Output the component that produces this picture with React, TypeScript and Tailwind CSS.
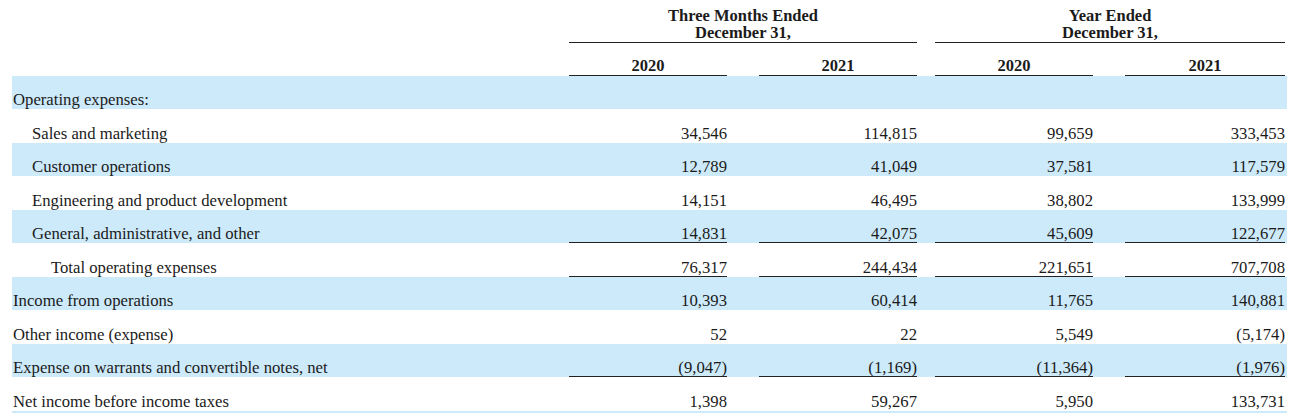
const rows: { label: string; indent: number; values: string[]; underline?: boolean }[] = [
  { label: "Operating expenses:", indent: 0, values: ["", "", "", ""] },
  { label: "Sales and marketing", indent: 1, values: ["34,546", "114,815", "99,659", "333,453"] },
  { label: "Customer operations", indent: 1, values: ["12,789", "41,049", "37,581", "117,579"] },
  { label: "Engineering and product development", indent: 1, values: ["14,151", "46,495", "38,802", "133,999"] },
  { label: "General, administrative, and other", indent: 1, values: ["14,831", "42,075", "45,609", "122,677"], underline: true },
  { label: "Total operating expenses", indent: 2, values: ["76,317", "244,434", "221,651", "707,708"], underline: true },
  { label: "Income from operations", indent: 0, values: ["10,393", "60,414", "11,765", "140,881"] },
  { label: "Other income (expense)", indent: 0, values: ["52", "22", "5,549", "(5,174)"] },
  { label: "Expense on warrants and convertible notes, net", indent: 0, values: ["(9,047)", "(1,169)", "(11,364)", "(1,976)"], underline: true },
  { label: "Net income before income taxes", indent: 0, values: ["1,398", "59,267", "5,950", "133,731"] },
];

// value columns: width + gap before it
const cols = ["w-[158px]", "ml-[32px] w-[158px]", "ml-[18px] w-[158px]", "ml-[32px] w-[160px]"];
const indents = ["pl-[1px]", "pl-[20px]", "pl-[39px]"];

function Row({ label, indent, values, underline, shaded }: { label: string; indent: number; values: string[]; underline?: boolean; shaded: boolean }) {
  return (
    <div className={`flex h-[33.5px] items-stretch ${shaded ? "bg-[#cdeafa]" : ""}`}>
      <div className={`w-[557px] flex items-end border-b-[1.5px] border-transparent ${indents[indent]}`}>
        <span className="leading-4">{label}</span>
      </div>
      {values.map((v, i) => (
        <div
          key={i}
          className={`${cols[i]} flex items-end justify-end border-b-[1.5px] ${underline ? "border-[#222]" : "border-transparent"}`}
        >
          <span className="leading-4">{v}</span>
        </div>
      ))}
    </div>
  );
}

export default function App() {
  return (
    <div className="w-[1292px] h-[413px] overflow-hidden bg-white text-[16.7px] text-[#1b1b1b] font-['Liberation_Serif','Times_New_Roman',serif]">
      <div className="ml-[12px] w-[1275px]">
        {/* Period headings */}
        <div className="flex h-[42.5px] font-bold text-[16.5px]">
          <div className="w-[557px]" />
          <div className="w-[348px] pt-[8px] border-b-[1.5px] border-[#222] text-center leading-[16.5px]">
            Three Months Ended
            <br />
            December 31,
          </div>
          <div className="ml-[18px] w-[350px] pt-[8px] border-b-[1.5px] border-[#222] text-center leading-[16.5px]">
            Year Ended
            <br />
            December 31,
          </div>
        </div>

        {/* Years */}
        <div className="flex h-[33px] font-bold text-[16.5px]">
          <div className="w-[557px]" />
          {["2020", "2021", "2020", "2021"].map((y, i) => (
            <div key={i} className={`${cols[i]} flex items-end justify-center border-b-[1.5px] border-[#222]`}>
              <span className="leading-none">{y}</span>
            </div>
          ))}
        </div>

        {rows.map((r, i) => (
          <Row key={i} {...r} shaded={i % 2 === 0} />
        ))}
        <div className="h-[33.5px] bg-[#cdeafa]" />
      </div>
    </div>
  );
}
